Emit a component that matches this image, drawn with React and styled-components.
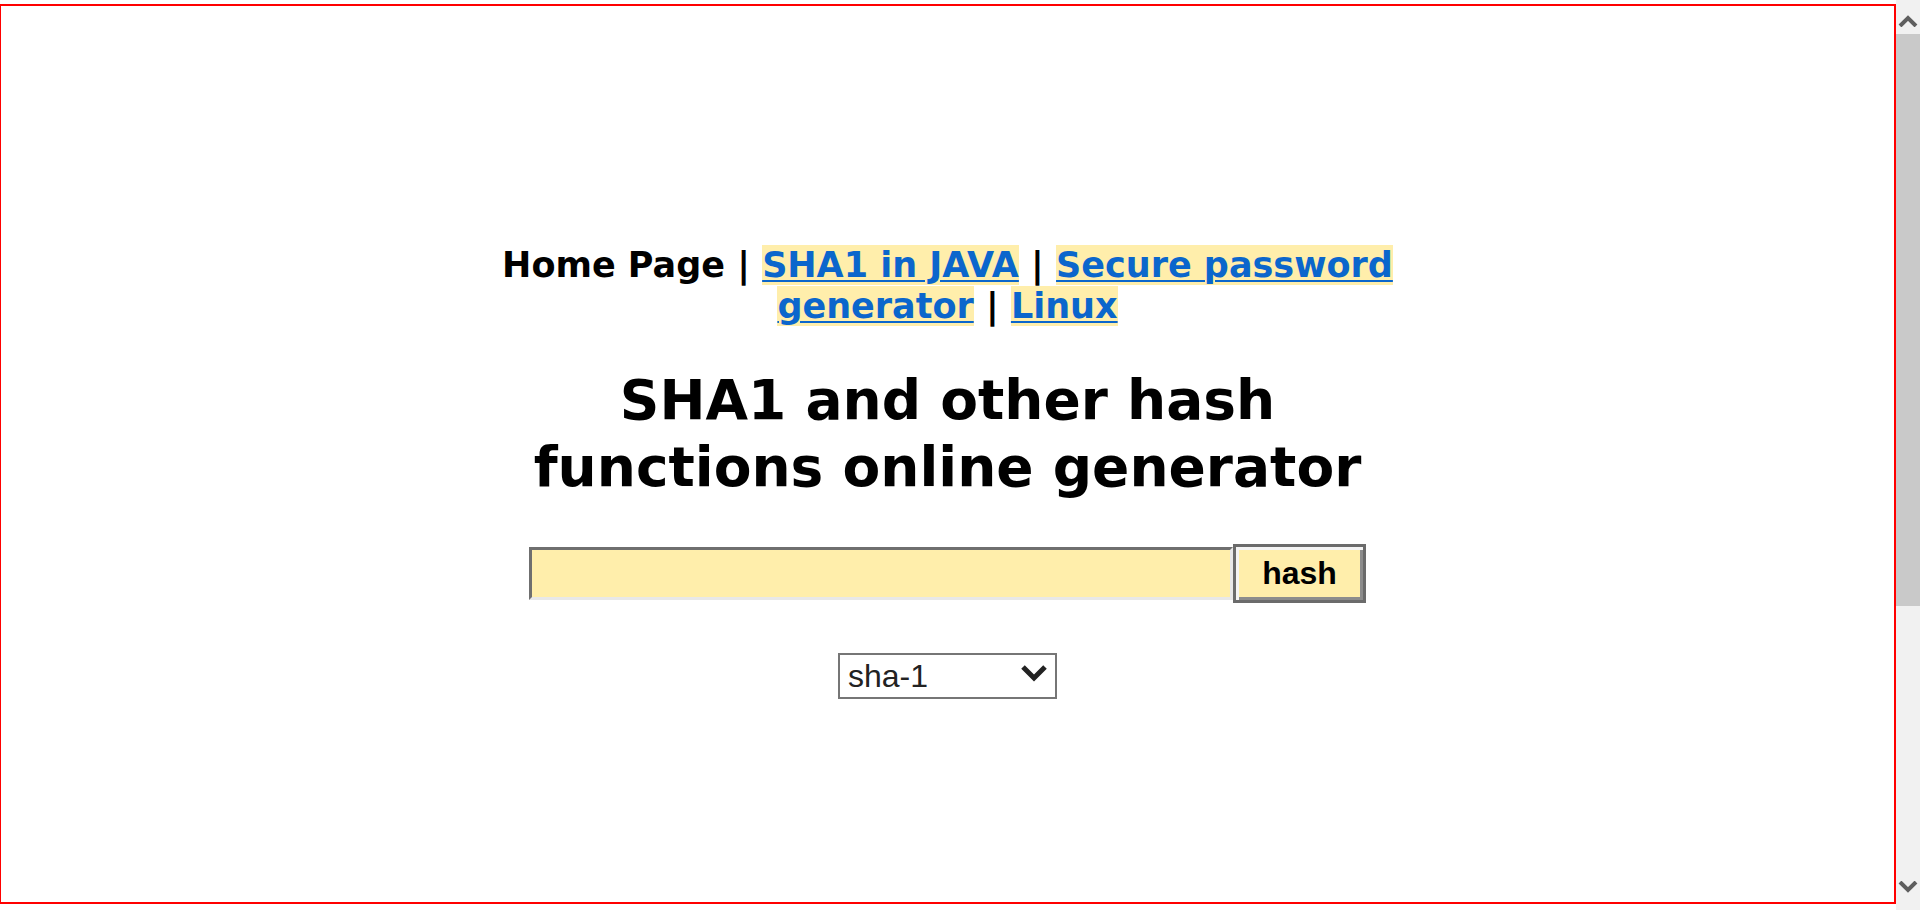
import React from 'react';
import styled, { createGlobalStyle } from 'styled-components';

const Global = createGlobalStyle`
  html, body { margin: 0; padding: 0; background: #ffffff; overflow: hidden; }
  body { font-family: "DejaVu Sans", Verdana, sans-serif; }
`;

const Screen = styled.div`
  display: flex;
  height: 910px;
  overflow: hidden;
`;

const Page = styled.div`
  flex: 1;
  min-width: 0;
`;

const Frame = styled.div`
  box-sizing: border-box;
  height: 900px;
  margin-top: 4px;
  border: 2px solid #ff0000;
  border-left-width: 1px;
  display: flex;
  justify-content: center;
  padding-top: 239px;
`;

const Column = styled.div`
  width: 920px;
  display: flex;
  flex-direction: column;
  align-items: center;
  text-align: center;
`;

const Nav = styled.div`
  font-size: 35px;
  font-weight: bold;
  line-height: 41px;
  color: #000;
`;

const NavLink = styled.a`
  color: #0b66cc;
  background: #ffeeab;
  text-decoration: underline;
  text-decoration-thickness: 2px;
  text-underline-offset: 3px;
`;

const Title = styled.h1`
  margin: 40px 0 0;
  font-size: 55px;
  line-height: 67px;
  font-weight: bold;
  color: #000;
`;

const FormRow = styled.form`
  margin: 43px 0 0;
  display: flex;
  align-items: center;
  justify-content: center;
`;

const TextInput = styled.input`
  box-sizing: border-box;
  width: 704px;
  height: 53px;
  margin: 0;
  padding: 0 8px;
  background: #ffeeab;
  border-style: solid;
  border-width: 3px;
  border-color: #6f6f6f #e8e8e8 #e8e8e8 #6f6f6f;
  font-size: 28px;
  font-family: "Liberation Sans", Arial, sans-serif;
  outline: none;
`;

const HashButton = styled.button`
  box-sizing: border-box;
  width: 133px;
  height: 59px;
  margin: 0;
  padding: 0;
  background: #ffeeab;
  border: 3px solid #6b6b6b;
  box-shadow: inset 3px 3px 0 #f4f4f4, inset -3px -3px 0 #8c8c8c;
  font-family: "Liberation Sans", Arial, sans-serif;
  font-weight: bold;
  font-size: 32px;
  color: #000;
`;

const SelectWrap = styled.div`
  position: relative;
  margin-top: 50px;
  width: 219px;
  height: 46px;
`;

const Select = styled.select`
  appearance: none;
  box-sizing: border-box;
  width: 100%;
  height: 100%;
  margin: 0;
  padding: 0 0 0 8px;
  background: #fff;
  border: 2px solid #767676;
  border-radius: 0;
  font-family: "Liberation Sans", Arial, sans-serif;
  font-size: 32px;
  color: #222;
  outline: none;
`;

const Chevron = styled.svg`
  position: absolute;
  right: 9px;
  top: 10px;
  pointer-events: none;
`;

const ScrollBar = styled.div`
  width: 24px;
  flex: 0 0 24px;
  display: flex;
  flex-direction: column;
  background: #f1f1f1;
`;

const ScrollButton = styled.div`
  height: 33px;
  display: flex;
  justify-content: center;
  align-items: ${(p) => (p.$down ? 'flex-start' : 'flex-end')};
  padding: ${(p) => (p.$down ? '4px 0 0' : '0 0 6px')};
  box-sizing: border-box;
`;

const Track = styled.div`
  flex: 1;
`;

const Thumb = styled.div`
  height: 572px;
  margin-top: 1px;
  background: #c9c9c9;
`;

export default function App() {
  return (
    <>
      <Global />
      <Screen>
        <Page>
          <Frame>
            <Column>
              <Nav>
                Home Page | <NavLink href="#">SHA1 in JAVA</NavLink> |{' '}
                <NavLink href="#">Secure password generator</NavLink> |{' '}
                <NavLink href="#">Linux</NavLink>
              </Nav>
              <Title>SHA1 and other hash functions online generator</Title>
              <FormRow onSubmit={(e) => e.preventDefault()}>
                <TextInput type="text" />
                <HashButton type="submit">hash</HashButton>
              </FormRow>
              <SelectWrap>
                <Select defaultValue="sha-1">
                  <option value="sha-1">sha-1</option>
                  <option value="sha-256">sha-256</option>
                  <option value="md5">md5</option>
                </Select>
                <Chevron width="28" height="20" viewBox="0 0 28 20">
                  <path d="M3 4 L14 15 L25 4" fill="none" stroke="#222" strokeWidth="5" />
                </Chevron>
              </SelectWrap>
            </Column>
          </Frame>
        </Page>
        <ScrollBar>
          <ScrollButton>
            <svg width="20" height="12" viewBox="0 0 20 12">
              <path d="M2 11 L10 3 L18 11" fill="none" stroke="#5f5f5f" strokeWidth="4" />
            </svg>
          </ScrollButton>
          <Track>
            <Thumb />
          </Track>
          <ScrollButton $down>
            <svg width="20" height="12" viewBox="0 0 20 12">
              <path d="M2 1 L10 9 L18 1" fill="none" stroke="#5f5f5f" strokeWidth="4" />
            </svg>
          </ScrollButton>
        </ScrollBar>
      </Screen>
    </>
  );
}
